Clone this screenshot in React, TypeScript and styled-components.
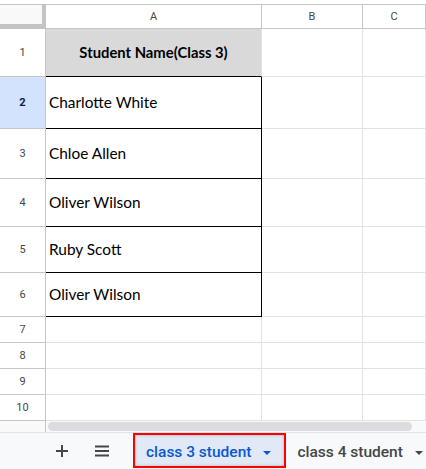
import React from "react";
import styled, { createGlobalStyle } from "styled-components";

const GlobalStyle = createGlobalStyle`
  html, body {
    margin: 0;
    padding: 0;
    background: #ffffff;
  }
  body {
    font-family: Roboto, "Liberation Sans", Arial, sans-serif;
    overflow: hidden;
  }
  * {
    box-sizing: border-box;
  }
`;

const Page = styled.div`
  width: 426px;
  height: 469px;
  padding-top: 4px;
  display: flex;
  flex-direction: column;
  overflow: hidden;
`;

const Sheet = styled.div`
  border-top: 1px solid #c4c7c5;
  display: flex;
  flex-direction: column;
`;

const Row = styled.div<{ $h: number }>`
  display: grid;
  grid-template-columns: 46px 216px 101px 1fr;
  height: ${(p) => p.$h}px;
`;

const Corner = styled.div`
  background: #f8f9fa;
  border-right: 4px solid #c4c4c4;
  border-bottom: 5px solid #c4c4c4;
`;

const ColHead = styled.div`
  display: flex;
  align-items: center;
  justify-content: center;
  font-size: 11px;
  color: #444746;
  border-right: 1px solid #c4c7c5;
  border-bottom: 1px solid #c4c7c5;
  background: #ffffff;
`;

const RowHead = styled.div<{ $selected?: boolean }>`
  display: flex;
  align-items: center;
  justify-content: center;
  font-size: 11px;
  font-weight: ${(p) => (p.$selected ? 700 : 400)};
  color: ${(p) => (p.$selected ? "#041e49" : "#444746")};
  background: ${(p) => (p.$selected ? "#d3e3fd" : "#ffffff")};
  border-right: 1px solid #c4c7c5;
  border-bottom: 1px solid #c4c7c5;
`;

const Cell = styled.div<{
  $head?: boolean;
  $boxBottom?: boolean;
  $boxRight?: boolean;
}>`
  display: flex;
  align-items: center;
  justify-content: ${(p) => (p.$head ? "center" : "flex-start")};
  padding-left: ${(p) => (p.$head ? 0 : 3)}px;
  padding-bottom: 1px;
  font-family: Lato, "Open Sans", sans-serif;
  font-size: ${(p) => (p.$head ? 14.8 : 15.4)}px;
  font-weight: ${(p) => (p.$head ? 700 : 400)};
  color: #000000;
  background: ${(p) => (p.$head ? "#d9d9d9" : "#ffffff")};
  border-right: 1px solid ${(p) => (p.$boxRight ? "#000000" : "#e2e2e2")};
  border-bottom: 1px solid ${(p) => (p.$boxBottom ? "#000000" : "#e2e2e2")};
  white-space: nowrap;
`;

const ScrollRow = styled.div`
  display: grid;
  grid-template-columns: 46px 1fr;
  height: 12px;
  background: #f8f9fa;
  border-bottom: 1px solid #e3e3e3;
`;

const ScrollCorner = styled.div`
  border-right: 1px solid #c4c7c5;
`;

const ScrollTrack = styled.div`
  display: flex;
  align-items: center;
  padding-left: 2px;
`;

const ScrollThumb = styled.div`
  width: 364px;
  height: 9px;
  border-radius: 5px;
  background: #dadce0;
`;

const TabBar = styled.div`
  flex: 1;
  display: flex;
  align-items: stretch;
  background: #f8f9fa;
  padding-left: 48px;
`;

const IconButton = styled.div`
  width: 28px;
  display: flex;
  align-items: center;
  justify-content: center;
  color: #444746;
  margin-right: 12px;
`;

const TabRow = styled.div`
  display: flex;
  margin-left: 5px;
`;

const Tab = styled.div<{ $active?: boolean }>`
  display: flex;
  align-items: center;
  gap: 12px;
  height: 35px;
  padding: 3px ${(p) => (p.$active ? 13 : 0)}px 0 11px;
  font-size: 15.5px;
  font-weight: 500;
  color: ${(p) => (p.$active ? "#0b57d0" : "#444746")};
  background: ${(p) => (p.$active ? "#e1e9f7" : "transparent")};
  border: ${(p) => (p.$active ? "2px solid #ff0000" : "none")};
  box-shadow: ${(p) =>
    p.$active ? "inset 0 0 3px rgba(60, 64, 67, 0.35)" : "none"};
  white-space: nowrap;
`;

const Caret = styled.span<{ $color: string }>`
  width: 0;
  height: 0;
  border-left: 4px solid transparent;
  border-right: 4px solid transparent;
  border-top: 4px solid ${(p) => p.$color};
  margin-top: 1px;
`;

const names = [
  { n: 2, name: "Charlotte White", h: 52 },
  { n: 3, name: "Chloe Allen", h: 50 },
  { n: 4, name: "Oliver Wilson", h: 48 },
  { n: 5, name: "Ruby Scott", h: 46 },
  { n: 6, name: "Oliver Wilson", h: 44 },
];

export default function App() {
  return (
    <>
      <GlobalStyle />
      <Page>
        <Sheet>
          <Row $h={24}>
            <Corner />
            <ColHead>A</ColHead>
            <ColHead>B</ColHead>
            <ColHead>C</ColHead>
          </Row>
          <Row $h={48}>
            <RowHead>1</RowHead>
            <Cell $head $boxBottom>
              Student Name(Class 3)
            </Cell>
            <Cell />
            <Cell />
          </Row>
          {names.map((r) => (
            <Row $h={r.h} key={r.n}>
              <RowHead $selected={r.n === 2}>{r.n}</RowHead>
              <Cell $boxBottom $boxRight>
                {r.name}
              </Cell>
              <Cell />
              <Cell />
            </Row>
          ))}
          {[7, 8, 9, 10].map((n) => (
            <Row $h={26} key={n}>
              <RowHead>{n}</RowHead>
              <Cell />
              <Cell />
              <Cell />
            </Row>
          ))}
        </Sheet>
        <ScrollRow>
          <ScrollCorner />
          <ScrollTrack>
            <ScrollThumb />
          </ScrollTrack>
        </ScrollRow>
        <TabBar>
          <IconButton>
            <svg width="14" height="14" viewBox="0 0 14 14">
              <path d="M7 1v12M1 7h12" stroke="currentColor" strokeWidth="2" />
            </svg>
          </IconButton>
          <IconButton>
            <svg width="16" height="12" viewBox="0 0 16 12">
              <path
                d="M1 1.5h14M1 6h14M1 10.5h14"
                stroke="currentColor"
                strokeWidth="1.8"
              />
            </svg>
          </IconButton>
          <TabRow>
            <Tab $active>
              class 3 student
              <Caret $color="#0b57d0" />
            </Tab>
            <Tab>
              class 4 student
              <Caret $color="#444746" />
            </Tab>
          </TabRow>
        </TabBar>
      </Page>
    </>
  );
}
